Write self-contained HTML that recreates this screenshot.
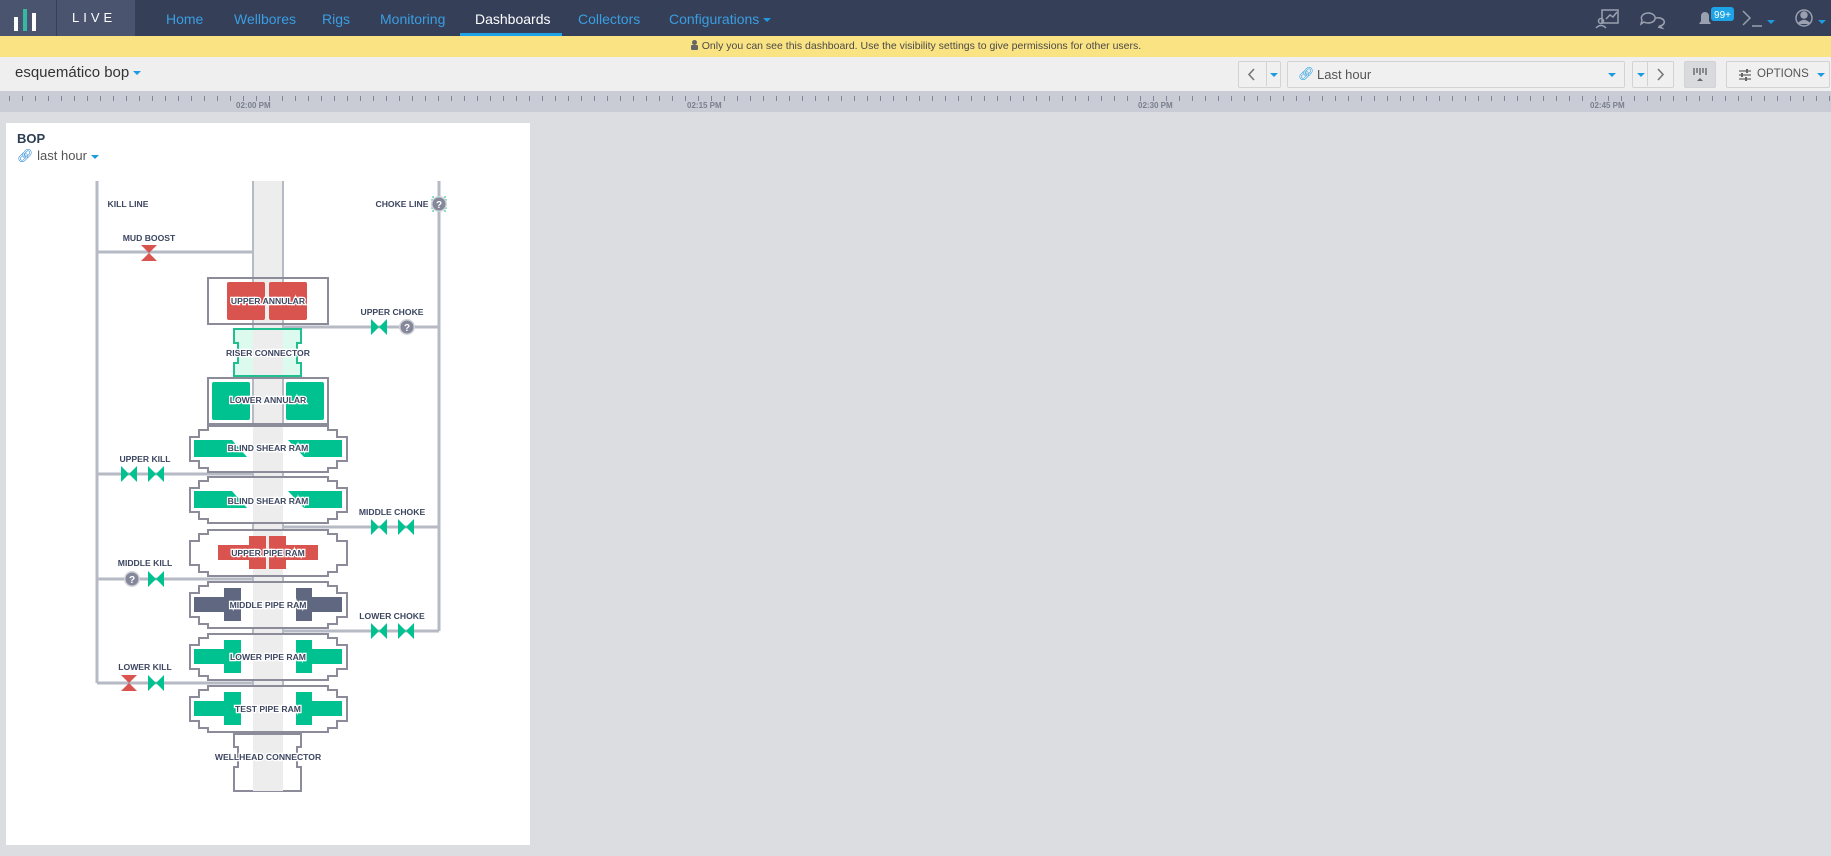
<!DOCTYPE html>
<html><head><meta charset="utf-8"><style>
*{margin:0;padding:0;box-sizing:border-box}
body{width:1831px;height:856px;background:#dcdde0;font-family:"Liberation Sans",sans-serif;position:relative;overflow:hidden}
.hdr{position:absolute;left:0;top:0;width:1831px;height:36px;background:#353f58}
.logo{position:absolute;left:0;top:0;width:56px;height:36px;background:#4a546e}
.live{position:absolute;left:57px;top:0;width:78px;height:36px;background:#4a546e;color:#fff;font-size:13px;letter-spacing:4px;line-height:36px;padding-left:15px}
.nav{position:absolute;top:0;height:36px;line-height:38px;font-size:14px;color:#3a9ee2}
.act{color:#fff}
.ul{position:absolute;left:460px;top:33px;width:102px;height:3px;background:#1ea4e6}
.yel{position:absolute;left:0;top:36px;width:1831px;height:21px;background:#fae382;font-size:10.5px;color:#4a4a4a;text-align:center;line-height:21px}
.tb{position:absolute;left:0;top:57px;width:1831px;height:34px;background:#efefef}
.btn{position:absolute;top:61px;height:27px;border:1px solid #d3d3d3;background:#f0f0f0;border-radius:2px}
.tl{position:absolute;left:0;top:91px;width:1831px;height:21px;background:#c9ccd4}
.lab{position:absolute;top:101px;font-size:8px;font-weight:bold;color:#7a7f8e}
.panel{position:absolute;left:6px;top:123px;width:524px;height:722px;background:#fff}
.car{display:inline-block;width:0;height:0;border-left:4px solid transparent;border-right:4px solid transparent;border-top:4px solid #1e9be0;vertical-align:middle}
</style></head><body>
<div class="hdr"></div>
<div class="logo"><svg width="56" height="36"><rect x="14" y="17" width="4" height="14" fill="#fff"/><rect x="23" y="9" width="4" height="22" fill="#35b9a0"/><rect x="32" y="13" width="4" height="18" fill="#fff"/></svg></div>
<div class="live">LIVE</div>
<div class="nav" style="left:166px">Home</div>
<div class="nav" style="left:234px">Wellbores</div>
<div class="nav" style="left:322px">Rigs</div>
<div class="nav" style="left:380px">Monitoring</div>
<div class="nav act" style="left:475px">Dashboards</div>
<div class="ul"></div>
<div class="nav" style="left:578px">Collectors</div>
<div class="nav" style="left:669px">Configurations <span class="car"></span></div>
<svg style="position:absolute;left:1590px;top:6px" width="241" height="26">
<g fill="none" stroke="#9aa0b0" stroke-width="1.5">
<rect x="12" y="4" width="16" height="13"/><polyline points="16,13 20,9 23,11 27,6"/><circle cx="11" cy="15" r="2.5"/><path d="M6 22 q5-5 10 0"/>
<path d="M58 7 a7 5 0 1 1 -4 9 l-3 2 1-4 a7 5 0 0 1 6-7z"/><path d="M66 12 a6 4 0 0 1 4 8 l2 2-4-1"/>
<path d="M153 5 l7 7 -7 7"/><line x1="162" y1="20" x2="172" y2="20"/>
<circle cx="214" cy="12" r="8"/><circle cx="214" cy="9" r="3" fill="#9aa0b0"/><path d="M208 18 q6-7 12 0" fill="#9aa0b0"/>
</g>
<path d="M109 18 h12 l-2-3 v-5 a4 4 0 0 0-8 0 v5z M113 20 h4" fill="#9aa0b0"/>
<rect x="121" y="1" width="23" height="14" rx="3" fill="#1ea4e6"/><text x="132.5" y="12" font-size="10" fill="#fff" text-anchor="middle" font-family="Liberation Sans">99+</text>
<path d="M177 14 l8 0 -4 4z M228 14 l8 0 -4 4z" fill="#1e9be0"/>
</svg>
<div class="yel"><svg width="9" height="10" style="vertical-align:-1px"><circle cx="4.5" cy="2.5" r="2.5" fill="#666"/><rect x="1" y="5" width="7" height="5" rx="1" fill="#666"/></svg> Only you can see this dashboard. Use the visibility settings to give permissions for other users.</div>
<div class="tb"></div>
<div style="position:absolute;left:15px;top:64px;font-size:15px;color:#333">esquemático bop <span class="car"></span></div>
<div class="btn" style="left:1238px;width:43px"><svg width="26" height="25" style="position:absolute;left:0;top:0"><path d="M15 7l-5 5.5 5 5.5" fill="none" stroke="#777" stroke-width="1.6"/></svg><span style="position:absolute;left:27px;top:-1px;height:25px;border-left:1px solid #d3d3d3"></span><span class="car" style="position:absolute;left:31px;top:11px"></span></div>
<div class="btn" style="left:1287px;width:338px"><span style="position:absolute;left:10px;top:4px;color:#1e9be0;font-size:13px">🔗︎</span><span style="position:absolute;left:29px;top:5px;font-size:13px;color:#555">Last hour</span><span class="car" style="position:absolute;left:320px;top:11px"></span></div>
<div class="btn" style="left:1632px;width:42px"><span class="car" style="position:absolute;left:4px;top:11px"></span><span style="position:absolute;left:14px;top:-1px;height:25px;border-left:1px solid #d3d3d3"></span><svg width="26" height="25" style="position:absolute;left:14px;top:0"><path d="M11 7l5 5.5 -5 5.5" fill="none" stroke="#777" stroke-width="1.6"/></svg></div>
<div class="btn" style="left:1684px;width:32px;background:#d9dade"><svg width="30" height="25"><path d="M9 6v7M12 6v5M15 6v7M18 6v5M21 6v7" stroke="#666" stroke-width="1.4"/><path d="M12 19l3-3 3 3z" fill="#666"/></svg></div>
<div class="btn" style="left:1726px;width:104px"><svg width="16" height="14" style="position:absolute;left:10px;top:6px"><path d="M2 3h12M2 7h12M2 11h12" stroke="#666" stroke-width="1.2"/><rect x="9" y="1" width="2" height="4" fill="#666"/><rect x="4" y="5" width="2" height="4" fill="#666"/><rect x="8" y="9" width="2" height="4" fill="#666"/></svg><span style="position:absolute;left:30px;top:6px;font-size:11.5px;color:#555">OPTIONS</span><span class="car" style="position:absolute;left:90px;top:11px"></span></div>
<div class="tl"></div>
<svg style="position:absolute;left:0;top:91px" width="1831" height="12"><defs><pattern id="tk" width="13" height="12" patternUnits="userSpaceOnUse"><rect x="9" y="5" width="1" height="5" fill="#7f8595"/></pattern></defs><rect width="1831" height="12" fill="url(#tk)"/></svg>
<div class="lab" style="left:236px">02:00 PM</div>
<div class="lab" style="left:687px">02:15 PM</div>
<div class="lab" style="left:1138px">02:30 PM</div>
<div class="lab" style="left:1590px">02:45 PM</div>
<div class="panel"></div>
<div style="position:absolute;left:17px;top:131px;font-size:13px;font-weight:bold;color:#2c3e50">BOP</div>
<div style="position:absolute;left:17px;top:148px;font-size:13px;color:#555"><span style="color:#1e7fd0">🔗︎</span> last hour <span class="car"></span></div>
<svg style="position:absolute;left:0;top:0" width="1831" height="856" font-family="Liberation Sans,sans-serif">
<g stroke="#b6bac5" stroke-width="3" fill="none">
<path d="M97 181V683M439 181V631M97 252H252M97 474H252M97 579H252M97 683H252M284 327H439M284 527H439M284 631H439"/>
</g>
<rect x="252" y="181" width="32" height="610" fill="#ededed"/>
<path d="M253 181V791M283 181V791" stroke="#b6bac5" stroke-width="2"/>
<g fill="#fff" stroke="#8b8b9a" stroke-width="2">
<rect x="208" y="278" width="120" height="46" fill="none"/>
<rect x="208" y="378" width="120" height="46" fill="none"/>
<path d="M208 426H328V430H337V437H347V461H337V468H328V472H208V468H199V461H190V437H199V430H208Z"/>
<path d="M208 477H328V481H337V488H347V512H337V519H328V523H208V519H199V512H190V488H199V481H208Z"/>
<path d="M208 530H328V534H337V541H347V565H337V572H328V576H208V572H199V565H190V541H199V534H208Z"/>
<path d="M208 582H328V586H337V593H347V617H337V624H328V628H208V624H199V617H190V593H199V586H208Z"/>
<path d="M208 634H328V638H337V645H347V669H337V676H328V680H208V676H199V669H190V645H199V638H208Z"/>
<path d="M208 686H328V690H337V697H347V721H337V728H328V732H208V728H199V721H190V697H199V690H208Z"/>
<path d="M234 734H301V747H297V767H301V791H234V767H238V747H234Z"/>
</g>
<g fill="#ededed"><rect x="253" y="427" width="30" height="44"/><rect x="253" y="478" width="30" height="44"/><rect x="253" y="531" width="30" height="44"/><rect x="253" y="583" width="30" height="44"/><rect x="253" y="635" width="30" height="44"/><rect x="253" y="687" width="30" height="44"/><rect x="253" y="735" width="30" height="56"/></g>
<path d="M234 329H301V343H297V363H301V376H234V363H238V343H234Z" fill="#dcfaee" stroke="#1fbf8f" stroke-width="2"/>
<rect x="253" y="330" width="30" height="45" fill="#ededed"/>
<g fill="#d9534f"><rect x="227" y="282" width="38" height="38" rx="2"/><rect x="269" y="282" width="38" height="38" rx="2"/>
<path d="M218 545H249V536H266V569H249V560H218Z"/><path d="M318 545H286V536H269V569H286V560H318Z"/></g>
<g fill="#00c291"><rect x="212" y="382" width="38" height="38" rx="2"/><rect x="286" y="382" width="38" height="38" rx="2"/>
<path d="M194 440H232L247 457H194Z"/><path d="M342 440H288L304 457H342Z"/>
<path d="M194 491H232L247 508H194Z"/><path d="M342 491H288L304 508H342Z"/>
<path d="M194 649H224V640H241V673H224V664H194Z"/><path d="M342 649H312V640H296V673H312V664H342Z"/>
<path d="M194 701H224V692H241V725H224V716H194Z"/><path d="M342 701H312V692H296V725H312V716H342Z"/></g>
<g fill="#5f6880"><path d="M194 597H224V588H241V621H224V612H194Z"/><path d="M342 597H312V588H296V621H312V612H342Z"/></g>
<g fill="#00c291">
<path d="M371 319L379 327 371 335ZM387 319L379 327 387 335Z"/>
<path d="M121 466L129 474 121 482ZM137 466L129 474 137 482Z"/><path d="M148 466L156 474 148 482ZM164 466L156 474 164 482Z"/>
<path d="M371 519L379 527 371 535ZM387 519L379 527 387 535Z"/><path d="M398 519L406 527 398 535ZM414 519L406 527 414 535Z"/>
<path d="M148 571L156 579 148 587ZM164 571L156 579 164 587Z"/>
<path d="M371 623L379 631 371 639ZM387 623L379 631 387 639Z"/><path d="M398 623L406 631 398 639ZM414 623L406 631 414 639Z"/>
<path d="M148 675L156 683 148 691ZM164 675L156 683 164 691Z"/></g>
<g fill="#d9534f"><path d="M141 245H157L149 253ZM141 261H157L149 253Z"/><path d="M121 675H137L129 683ZM121 691H137L129 683Z"/></g>
<g><rect x="432" y="197" width="14" height="14" fill="none" stroke="#1fbf8f" stroke-dasharray="2 2"/>
<circle cx="439" cy="204" r="8" fill="#d2d4da"/><circle cx="439" cy="204" r="6.5" fill="#85889a"/>
<circle cx="407" cy="327" r="8" fill="#d2d4da"/><circle cx="407" cy="327" r="6.5" fill="#85889a"/>
<circle cx="132" cy="579" r="8" fill="#d2d4da"/><circle cx="132" cy="579" r="6.5" fill="#85889a"/>
<g fill="#fff" font-size="10" font-weight="bold" text-anchor="middle"><text x="439" y="208">?</text><text x="407" y="331">?</text><text x="132" y="583">?</text></g></g>
<g font-size="8.6" font-weight="bold" fill="#3d4660" text-anchor="middle">
<text x="128" y="207">KILL LINE</text><text x="149" y="241">MUD BOOST</text><text x="402" y="207">CHOKE LINE</text>
<text x="392" y="315">UPPER CHOKE</text><text x="145" y="462">UPPER KILL</text><text x="392" y="515">MIDDLE CHOKE</text>
<text x="145" y="566">MIDDLE KILL</text><text x="392" y="619">LOWER CHOKE</text><text x="145" y="670">LOWER KILL</text>
<g stroke="#fff" stroke-width="2.5" paint-order="stroke">
<text x="268" y="304">UPPER ANNULAR</text><text x="268" y="356">RISER CONNECTOR</text><text x="268" y="403">LOWER ANNULAR</text>
<text x="268" y="451">BLIND SHEAR RAM</text><text x="268" y="504">BLIND SHEAR RAM</text><text x="268" y="556">UPPER PIPE RAM</text>
<text x="268" y="608">MIDDLE PIPE RAM</text><text x="268" y="660">LOWER PIPE RAM</text><text x="268" y="712">TEST PIPE RAM</text>
<text x="268" y="760">WELLHEAD CONNECTOR</text></g></g>
</svg>
</body></html>
